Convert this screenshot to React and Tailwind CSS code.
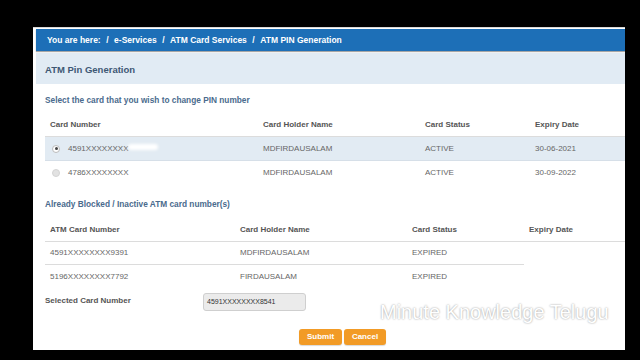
import { useState } from 'react';

const activeCards = [
    { number: '4591XXXXXXXX', name: 'MDFIRDAUSALAM', status: 'ACTIVE', expiry: '30-06-2021', redacted: true },
    { number: '4786XXXXXXXX', name: 'MDFIRDAUSALAM', status: 'ACTIVE', expiry: '30-09-2022' },
];

const blockedCards = [
    { number: '4591XXXXXXXX9391', name: 'MDFIRDAUSALAM', status: 'EXPIRED' },
    { number: '5196XXXXXXXX7792', name: 'FIRDAUSALAM', status: 'EXPIRED' },
];

function Radio({ checked }) {
    return (
        <span className={`w-[8px] h-[8px] rounded-full flex items-center justify-center ${checked ? 'bg-white border border-[#bbb]' : 'bg-[#e2e2e2] border border-[#d4d4d4]'}`}>
            {checked && <span className="w-[3px] h-[3px] rounded-full bg-[#444]" />}
        </span>
    );
}

export default function App() {
    const [selected, setSelected] = useState(0);

    return (
        <div className="w-[640px] h-[360px] bg-black overflow-hidden" style={{ fontFamily: '"Liberation Sans", Arial, sans-serif' }}>
            <div className="relative ml-[33px] mt-[27px] w-[592px] h-[323px] bg-white border-t border-[#d8d8d8] pt-[1px] pl-[3px]">
                {/* breadcrumb */}
                <div className="h-[22px] bg-[#1d6fb7] shadow-[0_1px_1px_rgba(0,0,0,0.35)] flex items-center pl-[11px] text-white font-bold text-[8.5px] gap-[5.5px]">
                    <span>You are here:</span>
                    <span>/</span>
                    <span>e-Services</span>
                    <span>/</span>
                    <span>ATM Card Services</span>
                    <span>/</span>
                    <span>ATM PIN Generation</span>
                </div>

                <div className="mt-[2px] h-[31px] bg-[#e1ebf4] flex items-center pl-[9px] pt-[3px] text-[9.5px] font-bold text-[#3e5874]">
                    ATM Pin Generation
                </div>

                <div className="pl-[9px]">
                    <div className="mt-[8px] h-[16px] flex items-center text-[8.3px] font-bold text-[#4a6b8d]">
                        Select the card that you wish to change PIN number
                    </div>

                    {/* active cards */}
                    <div className="mt-[6px] text-[8px]">
                        <div className="grid grid-cols-[213px_162px_110px_1fr] h-[23px] items-center pl-[5px] border-b border-[#dcdcdc] font-bold text-[#555]">
                            <span>Card Number</span>
                            <span>Card Holder Name</span>
                            <span>Card Status</span>
                            <span>Expiry Date</span>
                        </div>
                        {activeCards.map((card, i) => (
                            <div
                                key={i}
                                onClick={() => setSelected(i)}
                                className={`grid grid-cols-[213px_162px_110px_1fr] h-[24px] items-center pl-[5px] text-[#666] cursor-pointer ${i === 0 ? 'bg-[#e2ebf3] border-b border-[#d6dfe8]' : ''}`}
                            >
                                <span className="flex items-center gap-[8px] pl-[2px]">
                                    <Radio checked={selected === i} />
                                    <span className="relative">
                                        {card.number}
                                        {card.redacted && (
                                            <span className="absolute left-[60px] top-[1px] w-[30px] h-[6px] rounded-full bg-white blur-[1.5px]" />
                                        )}
                                    </span>
                                </span>
                                <span>{card.name}</span>
                                <span>{card.status}</span>
                                <span>{card.expiry}</span>
                            </div>
                        ))}
                    </div>

                    <div className="mt-[11px] h-[16px] flex items-center text-[8.3px] font-bold text-[#4a6b8d]">
                        Already Blocked / Inactive ATM card number(s)
                    </div>

                    {/* blocked cards */}
                    <div className="mt-[6px] text-[8px]">
                        <div className="grid grid-cols-[190px_172px_117px_1fr] h-[24px] items-center pl-[5px] border-b border-[#dcdcdc] font-bold text-[#555]">
                            <span>ATM Card Number</span>
                            <span>Card Holder Name</span>
                            <span>Card Status</span>
                            <span>Expiry Date</span>
                        </div>
                        {blockedCards.map((card, i) => (
                            <div key={i} className="flex h-[23px] text-[#666]">
                                <div className={`w-[479px] grid grid-cols-[190px_172px_1fr] items-center pl-[5px] ${i === 0 ? 'border-b border-[#dcdcdc]' : ''}`}>
                                    <span>{card.number}</span>
                                    <span>{card.name}</span>
                                    <span>{card.status}</span>
                                </div>
                            </div>
                        ))}
                    </div>

                    <div className="mt-[5px] flex items-start">
                        <span className="w-[158px] text-[8px] font-bold text-[#555] pt-[2px]">Selected Card Number</span>
                        <div className="w-[103px] h-[18px] bg-[#ebebeb] border border-[#cfcfcf] rounded-[3px] flex items-center pl-[3px] text-[7px] text-[#333]">
                            4591XXXXXXXX8541
                        </div>
                    </div>
                </div>

                <div className="mt-[18px] ml-[263px] flex gap-[2px]">
                    <button className="h-[16px] w-[43px] bg-[#f29b26] rounded-[3px] text-white font-bold text-[8px] shadow-[0_1px_1px_rgba(0,0,0,0.15)]">Submit</button>
                    <button className="h-[16px] w-[42px] bg-[#f29b26] rounded-[3px] text-white font-bold text-[8px] shadow-[0_1px_1px_rgba(0,0,0,0.15)]">Cancel</button>
                </div>

                {/* watermark */}
                <div className="absolute left-[347px] top-[274px] text-[20px] text-white leading-none [text-shadow:0_0_2px_rgba(0,0,0,0.45)]">
                    Minute Knowledge Telugu
                </div>
            </div>
        </div>
    );
}
